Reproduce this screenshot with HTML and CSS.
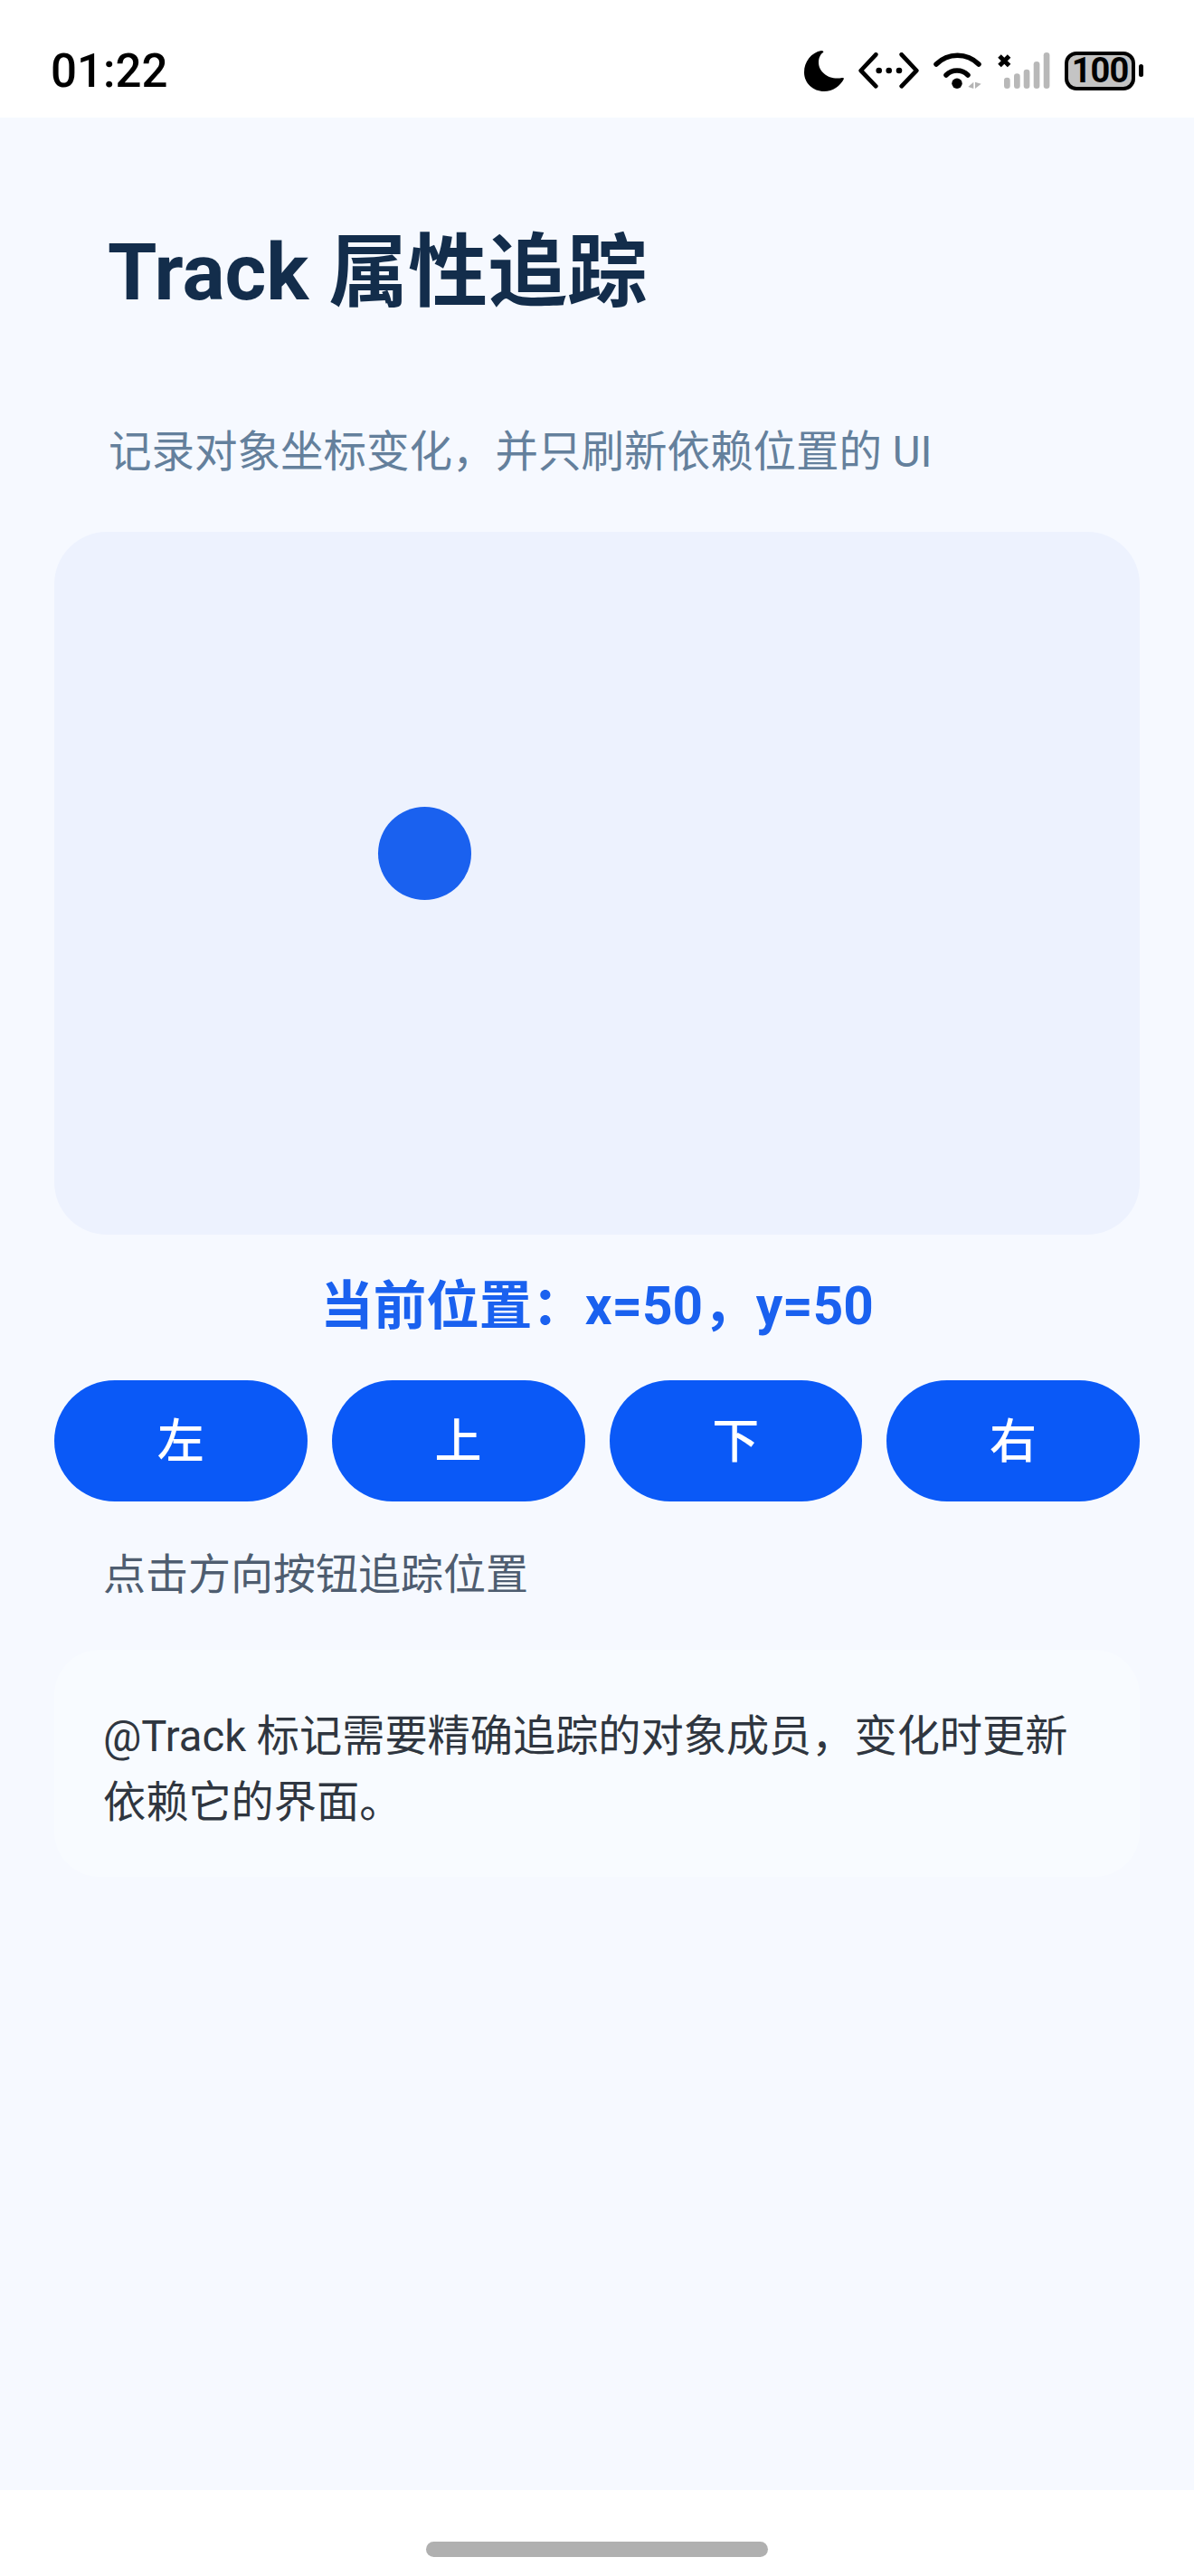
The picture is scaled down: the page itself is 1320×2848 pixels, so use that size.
FILE: index.html
```html
<!DOCTYPE html>
<html lang="zh-CN">
<head>
    <meta charset="UTF-8">
    <title>Track 属性追踪</title>
    <link rel="stylesheet" href="styles.css">
</head>
<body>
    <div class="status-bar">
        <span class="time">01:22</span>
        <div class="status-icons">
            <svg class="icon-moon" viewBox="0 0 44 45"><path d="M19 0C8 2 0 12 0 24C0 36 10 45 22 45C32 45 40 39 44 31C44 30 43 30 42 30C28 33 16 24 16 13C16 8 18 4 21 2C22 1 21 0 19 0Z"/></svg>
            <svg class="icon-code" viewBox="0 0 67 40" fill="none" stroke="#000" stroke-width="4.700" stroke-linecap="round" stroke-linejoin="round"><path d="M19.300 2.300 2.700 20 19.300 37.300M47.700 2.300 64.300 20 47.700 37.300"/><circle cx="22.700" cy="20" r="3.300" fill="#000" stroke="none"/><circle cx="33.700" cy="20" r="3.300" fill="#000" stroke="none"/><circle cx="45" cy="20" r="3.300" fill="#000" stroke="none"/></svg>
            <svg class="icon-wifi" viewBox="0 0 54 42" fill="none" stroke="#000" stroke-width="5.500" stroke-linecap="round"><path d="M3 14A33 33 0 0 1 50 14"/><path d="M14 26A17 17 0 0 1 38 26"/><circle cx="26" cy="35.300" r="5.700" fill="#000" stroke="none"/><path d="M44.300 33.700V41L38.300 39ZM46 33.700V41L52.700 35.700Z" fill="#b4b4b4" stroke="none"/></svg>
            <svg class="icon-signal" viewBox="0 0 59 42"><path d="M3 5 13.600 15.600M13.600 5 3 15.600" stroke="#000" stroke-width="5" fill="none"/><g fill="#b8b8b8"><rect x="8" y="28.700" width="6.700" height="12.300" rx="3.300"/><rect x="19" y="24.300" width="6.700" height="16.700" rx="3.300"/><rect x="29.700" y="19.700" width="6.700" height="21.300" rx="3.300"/><rect x="40.700" y="11" width="6.700" height="30" rx="3.300"/><rect x="51.700" y="1" width="6.700" height="40" rx="3.300"/></g></svg>
            <div class="battery"><span class="battery-level">100</span><span class="battery-tip"></span></div>
        </div>
    </div>

    <main class="page">
        <h1 class="title">Track 属性追踪</h1>
        <p class="subtitle">记录对象坐标变化，并只刷新依赖位置的 UI</p>
        <div class="stage">
            <div class="dot"></div>
        </div>
        <div class="position">当前位置：x=50，y=50</div>
        <div class="controls">
            <button class="btn">左</button>
            <button class="btn">上</button>
            <button class="btn">下</button>
            <button class="btn">右</button>
        </div>
        <p class="hint">点击方向按钮追踪位置</p>
        <div class="note">@Track 标记需要精确追踪的对象成员，变化时更新依赖它的界面。</div>
    </main>

    <div class="nav-bar"><span class="home-bar"></span></div>
</body>
</html>
```

FILE: styles.css
```css
* {
    box-sizing: border-box;
}

body {
    margin: 0;
    width: 1320px;
    height: 2848px;
    display: flex;
    flex-direction: column;
    background: #fff;
    font-family: "Roboto", "Noto Sans CJK SC", sans-serif;
}

.status-bar {
    height: 130px;
    flex: none;
    display: flex;
    justify-content: space-between;
    align-items: center;
    padding: 26px 56px 0 56px;
    background: #fff;
}

.time {
    font-size: 51px;
    font-weight: 500;
    color: #000;
}

.status-icons {
    display: flex;
    align-items: center;
    gap: 16px;
}

.icon-moon {
    width: 44px;
    height: 45px;
}

.icon-code {
    width: 67px;
    height: 40px;
}

.icon-wifi {
    width: 54px;
    height: 42px;
}

.icon-signal {
    width: 59px;
    height: 42px;
}

.battery {
    display: flex;
    align-items: center;
    gap: 4px;
}

.battery-level {
    width: 78px;
    height: 43px;
    display: flex;
    justify-content: center;
    align-items: center;
    background: #c4c4c4;
    border: 4px solid #000;
    border-radius: 13px;
    font-size: 38px;
    font-weight: 700;
    letter-spacing: -1px;
    color: #000;
}

.battery-tip {
    width: 5px;
    height: 14px;
    border-radius: 3px;
    background: #000;
}

.page {
    flex: 1;
    padding: 0 60px;
    background: #f6f9ff;
}

.title {
    margin: 0;
    padding: 121px 0 0 59px;
    font-size: 88px;
    line-height: 100px;
    font-weight: 700;
    color: #132d4b;
}

.subtitle {
    margin: 0;
    padding: 116px 0 0 60px;
    font-size: 47.5px;
    line-height: 66px;
    color: #64809c;
}

.stage {
    position: relative;
    height: 777px;
    margin-top: 55px;
    background: #edf2fe;
    border-radius: 58px;
}

.dot {
    position: absolute;
    left: 358px;
    top: 304px;
    width: 103px;
    height: 103px;
    border-radius: 50%;
    background: #1a61ef;
}

.position {
    margin-top: 44px;
    text-align: center;
    font-size: 58.5px;
    line-height: 70px;
    font-weight: 700;
    color: #1a61ef;
}

.controls {
    display: flex;
    gap: 27px;
    margin-top: 47px;
}

.btn {
    flex: 1;
    height: 134px;
    padding: 0 0 8px;
    border: none;
    border-radius: 67px;
    background: #0a59f7;
    color: #fff;
    font-family: inherit;
    font-size: 52px;
    font-weight: 500;
}

.hint {
    margin: 0;
    padding: 48px 0 0 54px;
    font-size: 47px;
    line-height: 66px;
    color: #4e5d70;
}

.note {
    margin-top: 50px;
    padding: 60px 54px 0;
    height: 251px;
    background: #f8fbff;
    border-radius: 50px;
    font-size: 47.2px;
    line-height: 73px;
    color: #2f3640;
}

.nav-bar {
    height: 95px;
    flex: none;
    display: flex;
    justify-content: center;
    padding-top: 57px;
    background: #fff;
}

.home-bar {
    width: 378px;
    height: 17px;
    border-radius: 9px;
    background: #b0b0b0;
}
```
